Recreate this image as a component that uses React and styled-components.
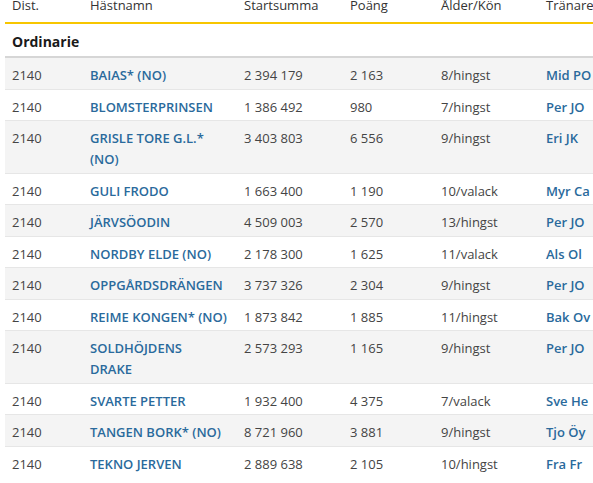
import styled, { createGlobalStyle } from "styled-components";

const GlobalStyle = createGlobalStyle`
    html, body {
        margin: 0;
        padding: 0;
        background: #ffffff;
        overflow: hidden;
    }
    body {
        font-family: "Open Sans", "Noto Sans", sans-serif;
        color: #333333;
    }
`

// names carry their own line break where the original column wraps them
const horses = [
    { dist: 2140, name: "BAIAS* (NO)", sum: "2 394 179", points: "2 163", age: "8/hingst", trainer: "Mid PO" },
    { dist: 2140, name: "BLOMSTERPRINSEN", sum: "1 386 492", points: "980", age: "7/hingst", trainer: "Per JO" },
    { dist: 2140, name: "GRISLE TORE G.L.*\n(NO)", sum: "3 403 803", points: "6 556", age: "9/hingst", trainer: "Eri JK" },
    { dist: 2140, name: "GULI FRODO", sum: "1 663 400", points: "1 190", age: "10/valack", trainer: "Myr Ca" },
    { dist: 2140, name: "JÄRVSÖODIN", sum: "4 509 003", points: "2 570", age: "13/hingst", trainer: "Per JO" },
    { dist: 2140, name: "NORDBY ELDE (NO)", sum: "2 178 300", points: "1 625", age: "11/valack", trainer: "Als Ol" },
    { dist: 2140, name: "OPPGÅRDSDRÄNGEN", sum: "3 737 326", points: "2 304", age: "9/hingst", trainer: "Per JO" },
    { dist: 2140, name: "REIME KONGEN* (NO)", sum: "1 873 842", points: "1 885", age: "11/hingst", trainer: "Bak Ov" },
    { dist: 2140, name: "SOLDHÖJDENS\nDRAKE", sum: "2 573 293", points: "1 165", age: "9/hingst", trainer: "Per JO" },
    { dist: 2140, name: "SVARTE PETTER", sum: "1 932 400", points: "4 375", age: "7/valack", trainer: "Sve He" },
    { dist: 2140, name: "TANGEN BORK* (NO)", sum: "8 721 960", points: "3 881", age: "9/hingst", trainer: "Tjo Öy" },
    { dist: 2140, name: "TEKNO JERVEN", sum: "2 889 638", points: "2 105", age: "10/hingst", trainer: "Fra Fr" },
];

const columns = [78, 154, 106, 91, 105, 90];

export default function App() {
    return (
        <>
            <GlobalStyle />
            <Page>
                <Table>
                    <colgroup>
                        {columns.map((w, i) => <col key={i} style={{ width: w }} />)}
                    </colgroup>
                    <thead>
                        <tr>
                            <Th>Dist.</Th>
                            <Th>Hästnamn</Th>
                            <Th>Startsumma</Th>
                            <Th>Poäng</Th>
                            <Th>Ålder/Kön</Th>
                            <Th>Tränare</Th>
                        </tr>
                    </thead>
                    <tbody>
                        <tr>
                            <GroupCell colSpan={6}>Ordinarie</GroupCell>
                        </tr>
                        {horses.map((h, index) => (
                            <Row key={index} $striped={index % 2 === 0} $first={index === 0}>
                                <Td>{h.dist}</Td>
                                <NameCell><Link>{h.name}</Link></NameCell>
                                <Td>{h.sum}</Td>
                                <Td>{h.points}</Td>
                                <Td>{h.age}</Td>
                                <Td><Link>{h.trainer}</Link></Td>
                            </Row>
                        ))}
                    </tbody>
                </Table>
            </Page>
        </>
    )
}

const Page = styled.div`
    padding-left: 5px;
    width: 700px;
`

const Table = styled.table`
    table-layout: fixed;
    width: 624px;
    border-collapse: collapse;
    margin-top: -11px;
    font-size: 13px;
    line-height: 21px;
`

const Th = styled.th`
    text-align: left;
    font-weight: 400;
    color: #333333;
    padding: 6px 7px;
    border-bottom: 2px solid #f7c600;
    white-space: nowrap;
`

const GroupCell = styled.td`
    font-weight: 700;
    font-size: 14px;
    color: #1a1a1a;
    padding: 7px 7px 4px;
    height: 20px;
`

const Row = styled.tr`
    background-color: ${(props) => props.$striped ? "#f4f4f4" : "#ffffff"};
    border-top: ${(props) => props.$first ? "2px solid #d6d6d6" : "1px solid #e6e6e6"};
`

const Td = styled.td`
    vertical-align: top;
    padding: 7px 9px 2.5px 7px;
    color: #444444;
    white-space: nowrap;
`

const NameCell = styled(Td)`
    white-space: pre-line;
`

const Link = styled.span`
    color: #2a6a9c;
    font-weight: 600;
`
